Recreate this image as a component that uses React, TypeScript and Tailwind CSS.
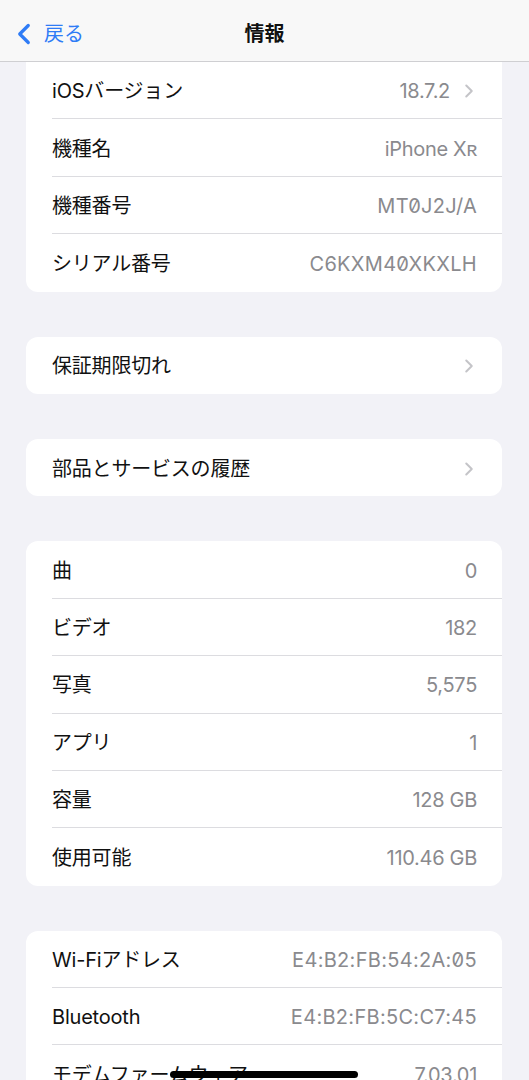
import { ChevronLeft, ChevronRight } from "lucide-react";

type Row = { label: string; value?: string; chevron?: boolean; mono?: boolean };

const groups: { rows: Row[]; first?: boolean }[] = [
  {
    first: true,
    rows: [
      { label: "iOSバージョン", value: "18.7.2", chevron: true },
      { label: "機種名", value: "iPhone Xʀ" },
      { label: "機種番号", value: "MT0J2J/A", mono: true },
      { label: "シリアル番号", value: "C6KXM40XKXLH", mono: true },
    ],
  },
  { rows: [{ label: "保証期限切れ", chevron: true }] },
  { rows: [{ label: "部品とサービスの履歴", chevron: true }] },
  {
    rows: [
      { label: "曲", value: "0" },
      { label: "ビデオ", value: "182" },
      { label: "写真", value: "5,575" },
      { label: "アプリ", value: "1" },
      { label: "容量", value: "128 GB" },
      { label: "使用可能", value: "110.46 GB" },
    ],
  },
  {
    rows: [
      { label: "Wi-Fiアドレス", value: "E4:B2:FB:54:2A:05", mono: true },
      { label: "Bluetooth", value: "E4:B2:FB:5C:C7:45", mono: true },
      { label: "モデムファームウェア", value: "7.03.01" },
      { label: "SEID" },
    ],
  },
];

const SettingRow = ({ row, last }: { row: Row; last: boolean }) => (
  <div className="flex h-[57.4px] pl-[26px]">
    <div
      className={`flex flex-1 items-center justify-between pt-[2px] ${
        last ? "" : "border-b border-[#dcdce0]"
      } ${row.chevron ? "pr-[22px]" : "pr-[25px]"}`}>
      <span className="text-[20px] text-[#111] tracking-[-0.2px]">{row.label}</span>
      <div className="flex items-center gap-[8px]">
        {row.value && (
          <span
            className={`text-[20px] text-[#8a8a8e] ${
              row.mono ? "slashed-zero tracking-[0.3px]" : "tracking-[-0.3px]"
            }`}>
            {row.value}
          </span>
        )}
        {row.chevron && (
          <ChevronRight size={22} strokeWidth={2.2} className="text-[#c4c4c8]" />
        )}
      </div>
    </div>
  </div>
);

const App = () => {
  return (
    <div
      className="relative h-[1080px] w-[529px] overflow-hidden bg-[#f2f2f7]"
      style={{ fontFamily: 'Inter, "Noto Sans CJK JP", sans-serif' }}>
      <header className="relative flex h-[62px] items-center border-b border-[#cfcfd2] bg-[#f8f8f8] pt-[6px]">
        <div className="flex items-center pl-[7px] text-[#2f7cf6]">
          <ChevronLeft size={34} strokeWidth={2.3} />
          <span className="ml-[3px] text-[20px]">戻る</span>
        </div>
        <h1 className="pointer-events-none absolute left-0 right-0 text-center text-[20px] font-bold text-[#111]">
          情報
        </h1>
      </header>

      <div className="flex flex-col gap-[45px] pl-[26px] pr-[27px]">
        {groups.map((g, i) => (
          <div
            key={i}
            className={`bg-white ${g.first ? "rounded-b-[12px]" : "rounded-[12px]"}`}>
            {g.rows.map((r, j) => (
              <SettingRow key={r.label} row={r} last={j === g.rows.length - 1} />
            ))}
          </div>
        ))}
      </div>

      <div className="absolute left-[170px] top-[1071px] h-[7px] w-[188px] rounded-full bg-black" />
    </div>
  );
};

export default App;
